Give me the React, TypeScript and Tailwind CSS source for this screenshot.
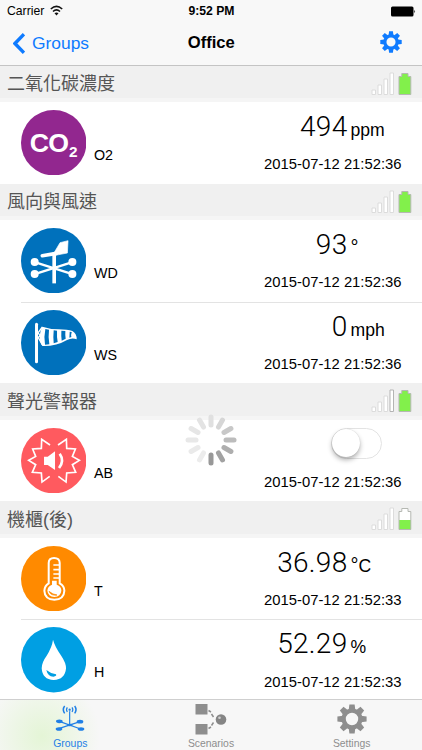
import type { ReactNode } from 'react'

interface Reading {
  label: string
  icon: ReactNode
  value?: string
  unit?: string
  time: string
}

interface Section {
  title: string
  battery: number
  strongSignal?: boolean
  readings: Reading[]
}

function Badge({ color, children }: { color: string; children: ReactNode }) {
  return (
    <svg viewBox="0 0 196 196" className="w-[65.4px] h-[65.4px] shrink-0">
      <circle cx="98" cy="98" r="98" fill={color} />
      {children}
    </svg>
  )
}

const co2Icon = (
  <Badge color="#92278f">
    <g fill="#fff" fontFamily="Liberation Sans, sans-serif" fontWeight="bold">
      <text x="26" y="127" fontSize="80" textLength="118">CO</text>
      <text x="144" y="140" fontSize="46">2</text>
    </g>
  </Badge>
)

const vaneIcon = (
  <Badge color="#0071bc">
    <g stroke="#fff" fill="#fff">
      <path d="M41 102L154 138M154 102L41 138" strokeWidth="7" />
      <path d="M99.500 74V166" strokeWidth="11" />
      <path d="M64 83L106 76" strokeWidth="11" strokeLinecap="round" />
      <path d="M100 73L117 44L141 38L139 75L102 82Z" strokeWidth="2" />
    </g>
    <g fill="#fff">
      <circle cx="41" cy="102" r="12" />
      <circle cx="154" cy="102" r="12" />
      <circle cx="41" cy="138" r="12" />
      <circle cx="154" cy="138" r="12" />
    </g>
  </Badge>
)

const sockIcon = (
  <Badge color="#0071bc">
    <path d="M46.500 43V155" stroke="#fff" strokeWidth="9" strokeLinecap="round" />
    <path d="M64 50Q88 58 113 58Q140 58 154 63Q167 70 167 88Q153 82 138 90Q106 109 64 108Q56 98 56 78Q57 62 64 50Z" fill="#fff" />
    <path d="M73 57L84 59Q81 81 85 103L72 104Q68 80 73 57ZM98 61L108 62Q107 80 110 96L98 100Q96 80 98 61ZM121 62L133 63Q132 77 134 86L122 92Q120 78 121 62ZM146 65L152 66Q149 75 151 81L145 83Z" fill="#0071bc" />
    <path d="M50 70L64 51M50 80L64 104M51 68L57 77L51 84" stroke="#fff" strokeWidth="4" fill="none" />
  </Badge>
)

const alarmIcon = (
  <Badge color="#ff5a5f">
    <path d="M69 86H80L102 70V126L80 111H69Z" fill="#fff" />
    <path d="M116 77Q131 98 114 120" stroke="#fff" strokeWidth="8" fill="none" />
    <g stroke="#fff" strokeWidth="5" fill="none">
      <path d="M87 51L62 34L61 61L35 63L44 85L23 97L44 110L34 133L61 135L63 162L86 145" />
      <path d="M111 51L136 34L137 61L163 63L154 85L175 97L154 110L164 133L137 135L135 162L112 145" />
    </g>
  </Badge>
)

const thermometerIcon = (
  <Badge color="#ff8a00">
    <path d="M83 51Q83 36 99 36Q116 36 116 51V112Q130 120 130 134Q129 160 100 161Q71 160 70 134Q71 119 83 112Z" fill="none" stroke="#fff" strokeWidth="6" />
    <path d="M97 57H115M97 71H115M97 84H115M97 96H115" stroke="#fff" strokeWidth="5" />
    <path d="M93 104H107V116Q121 121 121 134Q119 152 100 153Q81 152 79 134Q80 121 93 116Z" fill="#fff" />
    <path d="M84 136Q90 150 108 147Q94 145 84 136Z" fill="#ff8a00" stroke="#ff8a00" strokeWidth="2" />
  </Badge>
)

const dropIcon = (
  <Badge color="#009fe3">
    <path d="M96 38Q101 58 121 87Q135 108 135 124Q132 158 98 159Q64 158 62 124Q62 106 77 86Q93 60 96 38Z" fill="#fff" />
    <path d="M76 129Q88 139 105 142Q108 148 97 149Q80 148 76 129Z" fill="#009fe3" />
  </Badge>
)

const sections: Section[] = [
  {
    title: '二氧化碳濃度', battery: 1,
    readings: [{ label: 'O2', icon: co2Icon, value: '494', unit: 'ppm', time: '2015-07-12 21:52:36' }],
  },
  {
    title: '風向與風速', battery: 1,
    readings: [
      { label: 'WD', icon: vaneIcon, value: '93', unit: '°', time: '2015-07-12 21:52:36' },
      { label: 'WS', icon: sockIcon, value: '0', unit: 'mph', time: '2015-07-12 21:52:36' },
    ],
  },
  {
    title: '聲光警報器', battery: 1, strongSignal: true,
    readings: [{ label: 'AB', icon: alarmIcon, time: '2015-07-12 21:52:36' }],
  },
  {
    title: '機櫃(後)', battery: 0.5,
    readings: [
      { label: 'T', icon: thermometerIcon, value: '36.98', unit: '°C', time: '2015-07-12 21:52:33' },
      { label: 'H', icon: dropIcon, value: '52.29', unit: '%', time: '2015-07-12 21:52:33' },
    ],
  },
]

function Gear({ className, hole }: { className: string; hole: number }) {
  const body = (10.5 + hole) / 2
  return (
    <svg viewBox="-15 -15 30 30" className={className}>
      <circle r={body} fill="none" stroke="currentColor" strokeWidth={10.5 - hole} />
      {[0, 45, 90, 135, 180, 225, 270, 315].map(a => (
        <path key={a} d="M-3.300 -9L-2.600 -14.600H2.600L3.300 -9Z" fill="currentColor" transform={`rotate(${a})`} />
      ))}
    </svg>
  )
}

function Signal({ strong }: { strong?: boolean }) {
  return (
    <svg viewBox="0 0 24 24" className="w-6 h-6" fill="#fff" stroke="#dcdcdc">
      <path d="M1 18H4.500V22.500H1ZM7 13H10.500V22.500H7ZM13 7H16.500V22.500H13Z" />
      <path d="M19 1H22.500V22.500H19Z" stroke={strong ? '#b4b4b4' : '#dcdcdc'} />
    </svg>
  )
}

function Battery({ level }: { level: number }) {
  return (
    <svg viewBox="0 0 14 24" className="w-3.5 h-6">
      <path d="M1 4.500H3.800V1.500H10V4.500H12.800V22.500H1Z" fill={level === 1 ? '#82f04b' : '#fff'} />
      {level < 1 && <rect x="1" y="13" width="12" height="9.500" fill="#82f04b" />}
      <path d="M1 4.500H3.800V1.500H10V4.500H12.800V22.500H1Z" fill="none" stroke="#b5b8b2" />
    </svg>
  )
}

function ReadingRow({ reading, divided }: { reading: Reading; divided: boolean }) {
  return (
    <div className="pl-[20.5px]">
      <div className={`flex h-[81.6px] pr-[20.5px] ${divided ? 'border-t border-[#e3e3e3] pt-[7px]' : 'pt-2'}`}>
        {reading.icon}
        <span className="ml-2 mt-[35px] text-[14.3px] leading-5">{reading.label}</span>
        <div className="flex-1 flex flex-col items-end">
          {reading.value ? (
            <div className="flex items-baseline h-9 leading-[34px]">
              <span className="font-[Roboto,sans-serif] font-light text-[28px] tracking-[0.3px]">{reading.value}</span>
              <span className="w-[54px] pl-[3px] pb-px text-[17.600px]">
                {reading.unit?.startsWith('°') ? (
                  <><span className="text-[20px] leading-none">°</span>{reading.unit.slice(1)}</>
                ) : reading.unit}
              </span>
            </div>
          ) : (
            <div className="h-9 pr-[19.5px]">
              <div className="w-[51px] h-[31px] rounded-full border-[1.5px] border-[#e3e3e3] bg-white">
                <div className="w-[28px] h-[28px] rounded-full bg-white shadow-[0_3px_5px_rgba(0,0,0,0.3),0_0_1px_rgba(0,0,0,0.2)]" />
              </div>
            </div>
          )}
          <span className="mt-[8.500px] text-[14.8px] leading-5">{reading.time}</span>
        </div>
      </div>
    </div>
  )
}

const spokes = ['#e0e0e0', '#d6d6d6', '#c8c8c8', '#bcbcbc', '#aeaeae', '#a2a2a2', '#989898', '#ececec', '#eaeaea', '#e8e8e8', '#e6e6e6', '#e3e3e3']

function Spinner() {
  return (
    <svg viewBox="-26 -26 52 52" className="absolute left-[185px] top-[414px] w-[52px] h-[52px]">
      {spokes.map((c, i) => (
        <path key={i} d="M0 -15V-23" stroke={c} strokeWidth="5" strokeLinecap="round" transform={`rotate(${i * 30})`} />
      ))}
    </svg>
  )
}

function GroupsIcon() {
  return (
    <svg viewBox="165 45 90 90" className="w-[30px] h-[30px]" stroke="currentColor" fill="none">
      <circle cx="209" cy="62" r="3" fill="currentColor" />
      <path d="M202 55Q197 62 202 69M216 55Q221 62 216 69" strokeWidth="3.500" />
      <path d="M194 51Q186 62 194 73M224 51Q232 62 224 73" strokeWidth="4.500" />
      <path d="M209 67V108" strokeWidth="3.500" />
      <path d="M178 97L242 120M240 98L176 119" strokeWidth="3.500" />
      <g fill="currentColor" stroke="none">
        <ellipse cx="178" cy="97" rx="10" ry="5.500" />
        <ellipse cx="240" cy="98" rx="10" ry="5.500" />
        <ellipse cx="177" cy="120" rx="10" ry="5.500" />
        <ellipse cx="243" cy="120" rx="10" ry="5.500" />
        <ellipse cx="209" cy="108" rx="9" ry="4" />
      </g>
    </svg>
  )
}

function ScenariosIcon() {
  return (
    <svg viewBox="0 0 32 31" className="w-8 h-[31px] -mb-px">
      <path d="M.5 0H12.500V10.500H.5ZM.5 20H12.500V30.500H.5Z" fill="#8e8e8e" />
      <path d="M13.500 6.500L16 8M16.500 10L18.500 13M13.500 24.500L16 23M16.500 21.500L18.500 18.500" stroke="#8e8e8e" strokeWidth="1.500" fill="none" />
      <circle cx="26" cy="15.500" r="5.300" fill="#858585" />
      <circle cx="24.500" cy="13.800" r="1.300" fill="#d0d0d0" />
    </svg>
  )
}

export default function App() {
  return (
    <div className="relative w-[422px] h-[750px] overflow-hidden bg-white text-black font-['Liberation_Sans','Noto_Sans_CJK_TC',sans-serif] flex flex-col">
      <header className="h-[65.6px] shrink-0 bg-[#f8f8f8] border-b border-[#c4c4c4]">
        <div className="grid grid-cols-3 items-center h-[22px] pl-[7px] pr-[6px] text-[12.2px]">
          <div className="flex items-center gap-[6px]">
            Carrier
            <svg viewBox="0 0 13 11" className="w-[13px] h-[11px]" fill="none" stroke="#111" strokeWidth="1.600">
              <path d="M.8 4Q6.500 -1.200 12.200 4M3 6.500Q6.500 3.200 10 6.500" />
              <path d="M4.500 8.300Q6.500 6.600 8.500 8.300L6.500 10.500Z" fill="#111" stroke="none" />
            </svg>
          </div>
          <div className="text-center font-bold">9:52 PM</div>
          <svg viewBox="0 0 25 11" className="w-[25px] h-[11px] justify-self-end">
            <rect x="0" y=".5" width="22.500" height="10" rx="1.500" />
            <path d="M23.300 3.800Q25 5.500 23.300 7.200Z" />
          </svg>
        </div>
        <div className="grid grid-cols-3 items-center h-[43px] pl-[13px] pr-[20.5px]">
          <div className="flex items-center gap-[7px] text-[#0f7bff] text-[17.400px]">
            <svg viewBox="0 0 12 21" className="w-3 h-[21px]" fill="none" stroke="currentColor" strokeWidth="3.400">
              <path d="M11 1.200L2 10.500L11 19.800" />
            </svg>
            Groups
          </div>
          <div className="text-center font-bold text-[16.600px] pl-[8px]">Office</div>
          <Gear className="w-[22px] h-[22px] justify-self-end text-[#0f7bff] -mt-[3px]" hole={6.2} />
        </div>
      </header>

      <main className="flex-1">
        {sections.map(s => (
          <section key={s.title}>
            <div className="flex items-center h-[36.4px] pl-[7px] pr-[10px] bg-[#f0f0f0] border-b-4 border-[#f5f5f5]">
              <h2 className="flex-1 pt-[5px] text-[18px] leading-6 font-normal text-[#555]">{s.title}</h2>
              <div className="flex gap-[3.500px] pt-[4px]">
                <Signal strong={s.strongSignal} />
                <Battery level={s.battery} />
              </div>
            </div>
            {s.readings.map((r, i) => <ReadingRow key={r.label} reading={r} divided={i > 0} />)}
          </section>
        ))}
      </main>

      <Spinner />

      <nav className="absolute inset-x-0 bottom-0 h-[51px] border-t border-[#cfcfcf] bg-[#f7f7f7] bg-[radial-gradient(ellipse_58px_60px_at_42px_36px,#e4f5d6,#f7f7f7)] grid grid-cols-3 text-[10.400px] leading-3 text-[#8e8e8e]">
        <div className="flex flex-col items-center pt-[4px] gap-[3.5px] text-[#1f7fe6]">
          <GroupsIcon />
          Groups
        </div>
        <div className="flex flex-col items-center pt-[4px] gap-[3.5px]">
          <ScenariosIcon />
          Scenarios
        </div>
        <div className="flex flex-col items-center pt-[4px] gap-[3.5px]">
          <Gear className="w-[30px] h-[30px]" hole={6.2} />
          Settings
        </div>
      </nav>
    </div>
  )
}
